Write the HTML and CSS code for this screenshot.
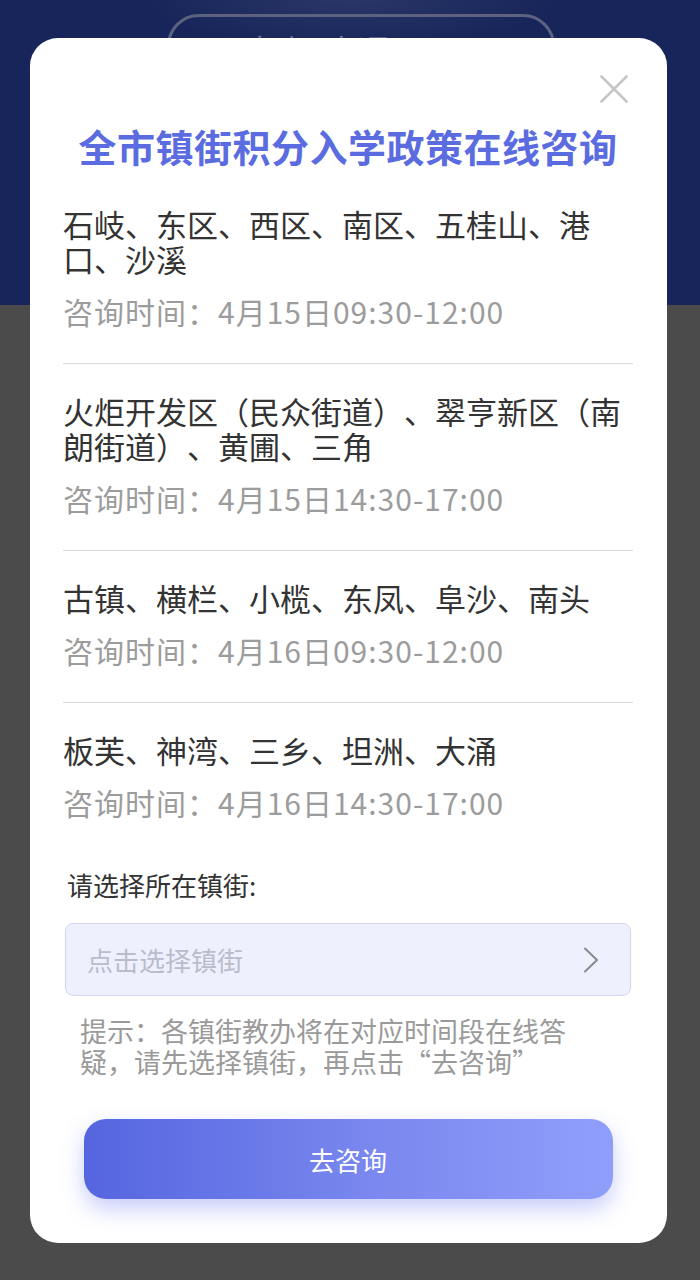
FILE: index.html
```html
<!DOCTYPE html>
<html lang="zh-CN">
<head>
    <meta charset="UTF-8">
    <meta name="viewport" content="width=device-width, initial-scale=1.0">
    <title>全市镇街积分入学政策在线咨询</title>
    <link rel="stylesheet" href="styles.css">
</head>
<body>
    <header class="top">
        <div class="pill">中山+商通12345</div>
    </header>
    <main class="page"></main>

    <div class="mask">
        <div class="card">
            <span class="close">
                <svg width="28" height="28" viewBox="0 0 28 28">
                    <path d="M1.5 1.5 L26.5 26.5 M26.5 1.5 L1.5 26.5" stroke="#c6c6c6" stroke-width="2.6" fill="none" stroke-linecap="round"/>
                </svg>
            </span>
            <h2 class="title">全市镇街积分入学政策在线咨询</h2>

            <div class="list">
                <div class="item">
                    <p class="area">石岐、东区、西区、南区、五桂山、港口、沙溪</p>
                    <p class="time">咨询时间：4月15日09:30-12:00</p>
                </div>
                <div class="item">
                    <p class="area">火炬开发区（民众街道）、翠亨新区（南朗街道）、黄圃、三角</p>
                    <p class="time">咨询时间：4月15日14:30-17:00</p>
                </div>
                <div class="item">
                    <p class="area">古镇、横栏、小榄、东凤、阜沙、南头</p>
                    <p class="time">咨询时间：4月16日09:30-12:00</p>
                </div>
                <div class="item">
                    <p class="area">板芙、神湾、三乡、坦洲、大涌</p>
                    <p class="time">咨询时间：4月16日14:30-17:00</p>
                </div>
            </div>

            <div class="label">请选择所在镇街:</div>
            <div class="select">
                <span class="placeholder">点击选择镇街</span>
                <svg width="16" height="26" viewBox="0 0 16 26">
                    <path d="M2 1.5 L14 13 L2 24.5" stroke="#8a8a8a" stroke-width="2" fill="none" stroke-linecap="round" stroke-linejoin="round"/>
                </svg>
            </div>
            <p class="hint">提示：各镇街教办将在对应时间段在线答疑，请先选择镇街，再点击“去咨询”</p>

            <button class="cta-button">去咨询</button>
        </div>
    </div>
</body>
</html>
```

FILE: styles.css
```css
body {
    margin: 0;
    padding: 0;
    font-family: "Noto Sans CJK SC", "Noto Sans", sans-serif;
    background: #4b4b4b;
    color: #333;
    text-spacing-trim: space-all;
}
.top {
    height: 305px;
    background: radial-gradient(ellipse 260px 60px at 50% 0, #2a3666, #17255a 80%);
    padding-top: 14px;
    box-sizing: border-box;
}
.pill {
    width: 388px;
    height: 64px;
    margin-left: 167px;
    border: 3px solid #5d6280;
    border-radius: 32px;
    color: #6c7191;
    font-size: 32px;
    text-align: center;
    line-height: 64px;
    box-sizing: border-box;
}
.mask {
    position: fixed;
    left: 0;
    top: 0;
    width: 100%;
    height: 100%;
}
.card {
    position: relative;
    background: #fff;
    width: 637px;
    margin: 38px 0 0 30px;
    border-radius: 28px;
    padding: 83px 34px 44px 33px;
    box-sizing: border-box;
}
.close {
    position: absolute;
    top: 37px;
    right: 39px;
    width: 28px;
    height: 28px;
}
.close svg {
    display: block;
}
.title {
    margin: 0;
    font-size: 38px;
    line-height: 50px;
    letter-spacing: 0.5px;
    font-weight: bold;
    color: #5a6ce0;
    text-align: center;
}
.list {
    margin-top: 6px;
}
.item {
    padding: 29px 0 34px;
    border-bottom: 1px solid #dcdcdc;
}
.item:last-child {
    border-bottom: none;
}
.item p {
    margin: 0;
}
.area {
    font-size: 31px;
    line-height: 35px;
    color: #333;
}
.time {
    margin-top: 18px !important;
    font-size: 30px;
    line-height: 35px;
    letter-spacing: 1px;
    color: #9c9c9c;
}
.label {
    margin: 13px 0 0 4px;
    font-size: 26px;
    line-height: 35px;
    color: #333;
}
.select {
    display: flex;
    justify-content: space-between;
    align-items: center;
    margin: 21px 2px 0 2px;
    height: 73px;
    padding: 0 31px 0 21px;
    background: #eef0fd;
    border: 1px solid #d3d6ef;
    border-radius: 8px;
    box-sizing: border-box;
}
.placeholder {
    font-size: 26px;
    color: #b9bccb;
}
.select svg {
    display: block;
}
.hint {
    margin: 19px 53px 0 17px;
    font-size: 27px;
    line-height: 31px;
    color: #9a9a9a;
}
.cta-button {
    display: block;
    width: 529px;
    height: 80px;
    margin: 42px auto 0;
    border: none;
    border-radius: 22px;
    background: linear-gradient(to right, #5565df, #7a88ef 55%, #909efb);
    box-shadow: 0 10px 22px rgba(96, 116, 240, 0.35);
    color: #fff;
    font-family: inherit;
    font-size: 26px;
    cursor: pointer;
}
```
